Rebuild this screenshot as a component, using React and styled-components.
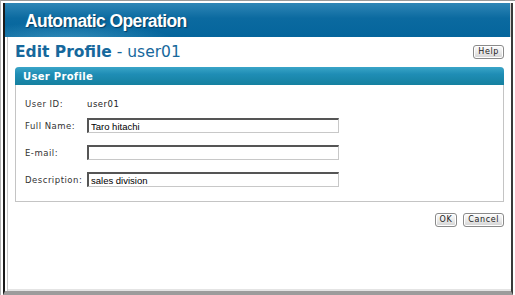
import React from 'react';
import styled, { createGlobalStyle } from 'styled-components';

const Global = createGlobalStyle`
	html, body { margin: 0; padding: 0; background: #fff; }
	body { font-family: "DejaVu Sans", Verdana, sans-serif; }
`;

const FRAME = styled.div`
	width: 515px;
	height: 295px;
	box-sizing: border-box;
	border-top: 1px solid #9a9a9a;
	border-left: 1px solid #b0b0b0;
	padding: 2px 2px 0 2px;
	background: #fff;
	display: flex;
	flex-direction: column;
`;

const WINDOW = styled.div`
	flex: 1;
	display: flex;
	flex-direction: column;
	border-left: 2px solid #1a1a1a;
	border-right: 2px solid #3a3a3a;
	border-bottom: 4px solid #9c9c9c;
	box-shadow: inset 2px 0 0 #fff, inset 3px 0 0 #c8c8c8, inset 0 -2px 0 #e4e4e4;
`;

const BANNER = styled.div`
	height: 34px;
	box-sizing: border-box;
	padding: 3px 0 0 20px;
	display: flex;
	align-items: center;
	background:
		radial-gradient(ellipse 160px 30px at 60px 40px, rgba(120, 200, 230, 0.45), rgba(120, 200, 230, 0) 70%),
		linear-gradient(180deg, #2f86b6 0%, #0b6aa0 45%, #05659c 100%);
	border-right: 1px solid #d0d0d0;
`;

const BANNER_TITLE = styled.div`
	color: #fff;
	font-family: "Liberation Sans", Arial, sans-serif;
	font-weight: bold;
	font-size: 17.5px;
	letter-spacing: -0.6px;
	text-shadow: 1px 1px 1px rgba(0, 40, 70, 0.7);
`;

const CONTENT = styled.div`
	flex: 1;
	padding: 4px 7px 0 10px;
	display: flex;
	flex-direction: column;
`;

const TITLEBAR = styled.div`
	display: flex;
	align-items: center;
	justify-content: space-between;
	height: 22px;
`;

const PAGE_TITLE = styled.h1`
	margin: 0;
	font-size: 15.5px;
	font-weight: normal;
	color: #16689c;
	b { font-weight: bold; }
`;

const BUTTON = styled.button`
	font-family: "DejaVu Sans", Verdana, sans-serif;
	font-size: 8px;
	letter-spacing: 0.6px;
	color: #222;
	height: 14px;
	padding: 0 4px;
	border: 1px solid #8a8a8a;
	border-radius: 3px;
	background: linear-gradient(180deg, #fdfdfd 0%, #e6e6e6 60%, #d2d2d2 100%);
	box-shadow: inset 0 0 0 1px #fff;
	line-height: 12px;
`;

const PANEL = styled.div`
	margin-top: 4px;
	border: 1px solid #c4c4c4;
	border-top: none;
	border-radius: 4px 4px 0 0;
`;

const PANEL_HEAD = styled.div`
	height: 18px;
	padding-left: 8px;
	display: flex;
	align-items: center;
	border-radius: 4px 4px 0 0;
	margin: 0 -1px;
	background: linear-gradient(180deg, #3aa5c8 0%, #1f8db5 40%, #15809f 100%);
	color: #fff;
	font-weight: bold;
	font-size: 10px;
	letter-spacing: 0.3px;
`;

const FORM = styled.div`
	padding: 10px 0 8px 9px;
	display: grid;
	grid-template-columns: 62px 252px;
	align-items: center;
`;

const LABEL = styled.div`
	font-size: 8.5px;
	letter-spacing: 0.5px;
	color: #333;
	height: ${(p) => p.h || 27}px;
	display: flex;
	align-items: center;
`;

const VALUE = styled.div`
	font-size: 8.5px;
	letter-spacing: 0.5px;
	color: #222;
	height: ${(p) => p.h || 27}px;
	display: flex;
	align-items: center;
`;

const FIELD = styled.input`
	box-sizing: border-box;
	width: 252px;
	height: 15px;
	padding: 0 2px;
	border: 1px solid #c8c8c8;
	border-top: 2px solid #555;
	border-left: 2px solid #555;
	font-family: "Liberation Sans", Arial, sans-serif;
	font-size: 9.5px;
	color: #000;
	background: #fff;
	outline: none;
`;

const ACTIONS = styled.div`
	display: flex;
	justify-content: flex-end;
	gap: 6px;
	margin-top: 11px;
`;

const App = () => {
	return (
		<FRAME>
			<Global />
			<WINDOW>
				<BANNER>
					<BANNER_TITLE>Automatic Operation</BANNER_TITLE>
				</BANNER>
				<CONTENT>
					<TITLEBAR>
						<PAGE_TITLE>
							<b>Edit Profile</b> - user01
						</PAGE_TITLE>
						<BUTTON>Help</BUTTON>
					</TITLEBAR>
					<PANEL>
						<PANEL_HEAD>User Profile</PANEL_HEAD>
						<FORM>
							<LABEL h={17}>User ID:</LABEL>
							<VALUE h={17}>user01</VALUE>
							<LABEL>Full Name:</LABEL>
							<VALUE>
								<FIELD defaultValue="Taro hitachi" />
							</VALUE>
							<LABEL>E-mail:</LABEL>
							<VALUE>
								<FIELD defaultValue="" />
							</VALUE>
							<LABEL>Description:</LABEL>
							<VALUE>
								<FIELD defaultValue="sales division" />
							</VALUE>
						</FORM>
					</PANEL>
					<ACTIONS>
						<BUTTON>OK</BUTTON>
						<BUTTON>Cancel</BUTTON>
					</ACTIONS>
				</CONTENT>
			</WINDOW>
		</FRAME>
	);
};

export default App;
